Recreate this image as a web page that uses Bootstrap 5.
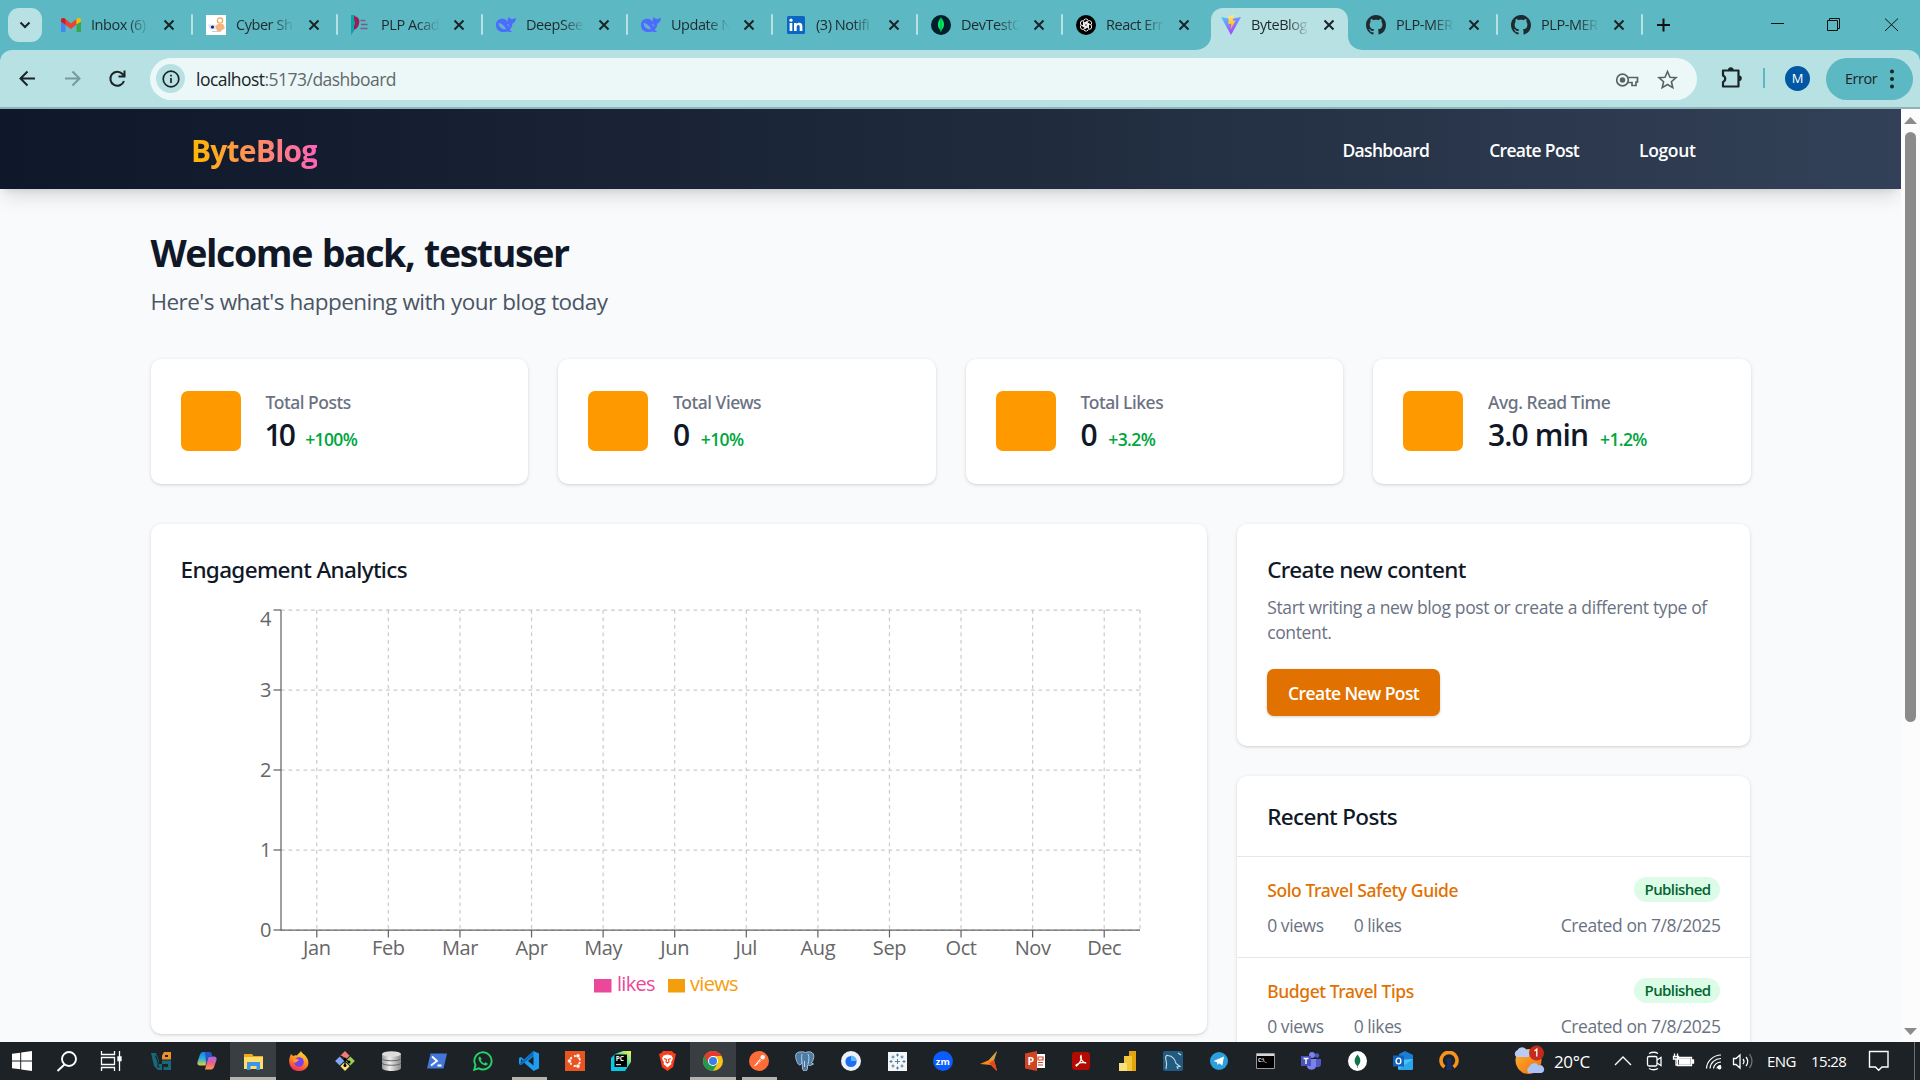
<!DOCTYPE html>
<html lang="en">
<head>
<meta charset="utf-8">
<title>ByteBlog</title>
<link rel="stylesheet" href="https://cdn.jsdelivr.net/npm/bootstrap@5.3.0/dist/css/bootstrap.min.css">
<style>
html,body{height:100%;overflow:hidden}
body{font-family:"Open Sans","Noto Sans",sans-serif;color:#101828;background:#f9fafc;font-size:17.5px;line-height:25px;width:1920px;height:1080px}
svg{display:block;flex:none}
svg.defs{position:absolute}
/* browser chrome */
.tabstrip{height:50px;background:#5cb8c2;padding-left:8px}
.tab-search{width:34px;height:34px;border-radius:11px;background:#b8e1e4;margin-top:8px;margin-right:5px}
.tab-item{width:145px;height:50px;padding:0 0 0 14px;position:relative;font-size:14.5px;color:#1f2a2e;line-height:50px}
.tab-item::after{content:"";position:absolute;right:-1px;top:14px;width:2px;height:21px;border-radius:1px;background:#b8e1e4}
.tab-item.plain::after{display:none}
.tab-label{width:60px;margin-left:10px;white-space:nowrap;letter-spacing:-.45px;-webkit-mask-image:linear-gradient(90deg,#000 60%,transparent 98%);mask-image:linear-gradient(90deg,#000 60%,transparent 98%)}
.tab-x{margin-left:12px}
.tab-item.current{z-index:1}
.tab-shape{position:absolute;left:-13px;top:8px;z-index:-1}
.toolbar-row{height:57px;background:#5cb8c2}
.toolbar-in{background:#b8e1e4;border-radius:12px 12px 0 0;height:57px}
.omni{width:1547px;height:42px;border-radius:21px;background:#ecf8f8;margin-left:13px;padding:2px 18px 0 6px}
.info-dot{width:29px;height:29px;border-radius:50%;background:#b8e1e4;margin-top:-2px}
.url-text{font-size:17.5px;margin-left:11px;color:#60696b;letter-spacing:-.53px}
.url-text b{font-weight:400;color:#1b2427}
.avatar-m{width:25px;height:25px;border-radius:50%;background:#0057a3;color:#fff;font-size:13px;line-height:25px;text-align:center}
.err-pill{width:87px;height:42px;border-radius:21px;background:#5cb8c2;font-size:14.5px;color:#1b2427;padding-left:19px;margin-left:16px;letter-spacing:-.5px;gap:12px}
.chrome-line{height:2px;background:#8fb3b7}
/* page */
.viewport-area{height:933px;overflow:hidden}
.page-col{width:1901px;background:#f9fafc}
.site-nav{height:80px;background:linear-gradient(90deg,#0f172a,#1e293b 50%,#334158);box-shadow:0 12px 18px -4px rgba(0,0,0,.12),0 5px 7px -4px rgba(0,0,0,.1);padding:3px 205.500px 0 191px}
.brand-text{font-size:30px;font-weight:700;line-height:40px;letter-spacing:-.8px;background:linear-gradient(90deg,#ffb900,#ff63b8);-webkit-background-clip:text;background-clip:text;color:transparent}
.nav-links{gap:60px}
.nav-links a{color:#fff;font-weight:600;text-decoration:none;white-space:nowrap;letter-spacing:-.68px}
.nav-links a:last-child{letter-spacing:-.35px}
.main-box{width:1600px;margin-left:150.5px;padding-top:39px}
.main-box h1{font-size:37.5px;line-height:50px;font-weight:700;margin:0;letter-spacing:-1.42px;word-spacing:1.500px}
.sub-text{font-size:22.5px;line-height:30px;color:#4a5565;margin:9px 0 42px;letter-spacing:-.55px;word-spacing:.5px}
.grid-row{--bs-gutter-x:30px}
.second-row{margin-top:40px}
.panel{background:#fff;border-radius:10px;box-shadow:0 1px 4px rgba(0,0,0,.1),0 1px 2px rgba(0,0,0,.08)}
.stat{height:125px;padding:32px 30px 0}
.stat-sq{width:60px;height:60px;border-radius:7px;background:#ff9900;margin-right:25px}
.stat-label,.panel-title,.post-link{font-family:"Noto Sans","Open Sans",sans-serif;font-weight:500}
.stat-label{color:#6a7282;letter-spacing:-.45px;line-height:24px;margin-top:-1px}
.stat-val{font-size:30px;line-height:42px;font-weight:600;letter-spacing:-1.3px}
.stat-pct{color:#00a63e;font-weight:600;margin-left:12px;letter-spacing:-.63px}
.stat-val.pair{letter-spacing:-2.800px;margin-left:-1px}
.stat-val.wide{letter-spacing:-.9px}
.panel-title{font-size:22.5px;line-height:30px;margin:0;letter-spacing:-.65px}
.chart-panel{height:510px;padding:31px 30px 29px}
.chart-panel text{font-size:20px;fill:#666;letter-spacing:-.4px}
.create-panel{padding:31px 30px 30px}
.p-text{color:#6a7282;margin:10px 0 24px;width:460px;letter-spacing:-.36px;white-space:nowrap}
.btn-new{background:#e17100;color:#fff;font-weight:600;width:173px;height:47px;border:0;border-radius:7px;font-size:17.5px;padding:2px 0 0;white-space:nowrap;letter-spacing:-.59px;box-shadow:0 1px 3px rgba(0,0,0,.18)}
.recent{margin-top:30px}
.recent .panel-title{padding:26px 30px 24px}
.post-item{border-top:1px solid #e5e7eb;padding:20px 30px}
.post-link{color:#e17100;text-decoration:none;letter-spacing:-.4px;padding-top:1px;height:25px}
.pub{background:#dcfce7;color:#016630;font-size:15px;font-weight:600;line-height:25px;border-radius:13px;width:86px;text-align:center;letter-spacing:-.59px}
.meta-row{color:#6a7282;margin-top:11px;height:24px;letter-spacing:-.42px}
.meta-row span+span{margin-left:30px}
.sbar{width:19px;background:#fcfcfc}
.sthumb{width:11px;height:590px;border-radius:6px;background:#8b8b8b}
/* taskbar */
.taskbar{height:38px;background:#1c2226;color:#fff;font-size:15px}
.tb{width:46px;height:38px;display:flex;align-items:center;justify-content:center;position:relative;flex:none}
.tb.start{width:44px}
.tb.view{width:42px;margin-right:6px}
.tb.lit{background:#393e42}
.tb.run::after{content:"";position:absolute;left:6px;right:5px;bottom:0;height:3px;background:#b5b3ae}
.tb.lit.run::after{left:0;right:0}
.tb svg text{font-family:"Open Sans",sans-serif;font-weight:700}
.temp-text{font-size:17px;letter-spacing:-.4px;width:51px;margin-left:9px}
.lang-text{width:44px;letter-spacing:-.6px}
.clock-text{width:55px;letter-spacing:-.6px}
</style>
</head>
<body>
<svg class="defs" width="0" height="0">
<defs>
<symbol id="x" viewBox="0 0 12 12"><path d="M1.500 1.500l9 9M10.500 1.500l-9 9" stroke="#1b2427" stroke-width="2" fill="none"/></symbol>
<symbol id="whale" viewBox="0 0 20 20"><path d="M0 10C0 5 4 3 8 4c2 .7 3 2 4 3-1-2 0-4 1-5 .6 1.500 2 2 3.500 2L20 3c-.3 3-1.500 5-3.500 5.500C16 12 15 13.500 13.500 15l2.500 1.500c-2 1-4 .3-5 0C5 18.500 0 15.500 0 10z" fill="#4d6bfe"/><path d="M2.500 8c3 0 6 3 7.500 6-3 1-7-1-7.500-6z" fill="#5cb8c2"/><path d="M11 9.500c1.500 0 2 1 2 2" stroke="#5cb8c2" fill="none"/></symbol>
<symbol id="gh" viewBox="0 0 16 16"><path fill="#1f2a30" d="M8 0C3.580 0 0 3.580 0 8c0 3.540 2.290 6.530 5.470 7.590.4.070.55-.17.55-.38 0-.19-.01-.82-.01-1.490-2.010.37-2.530-.49-2.690-.94-.09-.23-.48-.94-.82-1.130-.28-.15-.68-.52-.01-.53.63-.01 1.080.58 1.230.82.72 1.210 1.870.87 2.330.66.07-.52.28-.87.51-1.070-1.780-.2-3.640-.89-3.640-3.950 0-.87.31-1.590.82-2.150-.08-.2-.36-1.020.08-2.120 0 0 .67-.21 2.200.82.64-.18 1.320-.27 2-.27s1.360.09 2 .27c1.530-1.040 2.200-.82 2.200-.82.44 1.100.16 1.920.08 2.120.51.56.82 1.270.82 2.150 0 3.070-1.870 3.750-3.650 3.950.29.25.54.73.54 1.480 0 1.070-.01 1.930-.01 2.200 0 .21.15.46.55.38A8.010 8.010 0 0 0 16 8c0-4.420-3.580-8-8-8z"/></symbol>
<linearGradient id="vg" x1="0" y1="0" x2=".6" y2="1"><stop stop-color="#41d1ff"/><stop offset="1" stop-color="#bd34fe"/></linearGradient>
<linearGradient id="vy" x1="0" y1="0" x2="0" y2="1"><stop stop-color="#ffea83"/><stop offset="1" stop-color="#ffa800"/></linearGradient>
<linearGradient id="cp1" x1="0" y1="0" x2="0" y2="1"><stop stop-color="#1a7fe8"/><stop offset=".5" stop-color="#2bb0d8"/><stop offset="1" stop-color="#e8d03a"/></linearGradient>
<linearGradient id="cp2" x1="0" y1="0" x2="0" y2="1"><stop stop-color="#9b6cf0"/><stop offset=".5" stop-color="#ee5d8a"/><stop offset="1" stop-color="#ff9a4a"/></linearGradient>
<linearGradient id="ff" x1="0.700" y1="0" x2=".3" y2="1"><stop stop-color="#ffe03a"/><stop offset=".5" stop-color="#ff8a1e"/><stop offset="1" stop-color="#f0285a"/></linearGradient>
<linearGradient id="db" x1="0" x2="1"><stop stop-color="#999"/><stop offset=".4" stop-color="#eee"/><stop offset="1" stop-color="#888"/></linearGradient>
<linearGradient id="ws" x1="0" y1="0" x2="1" y2="1"><stop stop-color="#ffb52e"/><stop offset="1" stop-color="#ee6a12"/></linearGradient>
<linearGradient id="pyc" x1="0" y1="1" x2="1" y2="0"><stop stop-color="#07c3f2"/><stop offset=".5" stop-color="#12cdd4"/><stop offset=".7" stop-color="#7fe08a"/><stop offset="1" stop-color="#fcf84a"/></linearGradient>
</defs>
</svg>

<header>
<div class="tabstrip d-flex">
  <div class="tab-search d-flex align-items-center justify-content-center"><svg width="12" height="8" viewBox="0 0 12 8"><path d="M1.500 1.500L6 6l4.500-4.500" fill="none" stroke="#1b2427" stroke-width="2"/></svg></div>
  <div class="tab-item d-flex align-items-center"><svg width="20" height="15" viewBox="0 0 20 15"><path d="M0 2v12h4.500V6z" fill="#4285f4"/><path d="M20 2v12h-4.500V6z" fill="#34a853"/><path d="M0 1.800C0 .5 2-.6 4.500 1L10 5.500 15.500 1 15.500 6.500 10 11 0 3.500z" fill="#ea4335"/><path d="M0 2.500C0 0 2.500-.6 4.500 1v5.500L0 3.500z" fill="#c5221f"/><path d="M20 2.500C20 0 17.500-.6 15.500 1v5.500L20 3.500z" fill="#fbbc04"/></svg><span class="tab-label">Inbox (6)</span><svg class="tab-x" width="12" height="12"><use href="#x"/></svg></div>
  <div class="tab-item d-flex align-items-center"><svg width="20" height="20" viewBox="0 0 20 20"><path fill="#fff" d="M0 0h20v20H0z"/><circle cx="14" cy="5.500" r="2.600" fill="none" stroke="#f4a55c" stroke-width="1.300"/><path d="M9 11l3-2h5l2 4-4 3h-4z" fill="#f7b57a"/><path d="M2 9.500h7l1 5H4z" fill="#dde3f4"/><circle cx="6.500" cy="12" r="1.600" fill="#17236a"/><path d="M6 16.500h9" stroke="#c3cde8"/></svg><span class="tab-label">Cyber Sh</span><svg class="tab-x" width="12" height="12"><use href="#x"/></svg></div>
  <div class="tab-item d-flex align-items-center"><svg width="20" height="20" viewBox="0 0 20 20"><path d="M0 0h4v6l2 2-3 8-3 4z" fill="#10a3a6"/><path d="M3 1c5 1 6 4 5 8-1 3.500-2.500 5-5 5.500V11c1.500-2 1.500-4.500 0-6z" fill="#9c1c55"/><path d="M9.500 5.500h5M10 9.500h6.500M9.500 13.500h7" stroke="#7a5c8c" stroke-width="1.400"/></svg><span class="tab-label">PLP Acad</span><svg class="tab-x" width="12" height="12"><use href="#x"/></svg></div>
  <div class="tab-item d-flex align-items-center"><svg width="20" height="20"><use href="#whale"/></svg><span class="tab-label">DeepSee</span><svg class="tab-x" width="12" height="12"><use href="#x"/></svg></div>
  <div class="tab-item d-flex align-items-center"><svg width="20" height="20"><use href="#whale"/></svg><span class="tab-label">Update N</span><svg class="tab-x" width="12" height="12"><use href="#x"/></svg></div>
  <div class="tab-item d-flex align-items-center"><svg width="20" height="20" viewBox="0 0 20 20"><rect x="1" y="1" width="18" height="18" rx="1.500" fill="#0a66c2"/><path d="M3.600 8h2.700v8H3.600zM8 8h2.600v1.200C11.200 8.200 12 7.800 13.200 7.800c2.300 0 3.200 1.400 3.200 3.800V16h-2.700v-4c0-1.200-.3-1.900-1.300-1.900S10.700 11 10.700 12v4H8z" fill="#fff"/><circle cx="5" cy="5.200" r="1.600" fill="#fff"/></svg><span class="tab-label">(3) Notifi</span><svg class="tab-x" width="12" height="12"><use href="#x"/></svg></div>
  <div class="tab-item d-flex align-items-center"><svg width="20" height="20" viewBox="0 0 20 20"><circle cx="10" cy="10" r="10" fill="#001e2b"/><path d="M10 2.500c4 4.500 4 9.500.2 13V17h-.6v-1.500C6 12 6 7 10 2.500z" fill="#00ed64"/><path d="M10 3v13" stroke="#07a34c"/></svg><span class="tab-label">DevTestC</span><svg class="tab-x" width="12" height="12"><use href="#x"/></svg></div>
  <div class="tab-item plain d-flex align-items-center"><svg width="20" height="20" viewBox="0 0 20 20"><circle cx="10" cy="10" r="10" fill="#000"/><g fill="none" stroke="#fff" stroke-width=".9"><path id="kn" d="M7.500 11.500V6.300a2.500 2.500 0 0 1 4.700-1.100M7.500 7.200l4.600 2.600"/><use href="#kn" transform="rotate(60 10 10)"/><use href="#kn" transform="rotate(120 10 10)"/><use href="#kn" transform="rotate(180 10 10)"/><use href="#kn" transform="rotate(240 10 10)"/><use href="#kn" transform="rotate(300 10 10)"/></g></svg><span class="tab-label">React Err</span><svg class="tab-x" width="12" height="12"><use href="#x"/></svg></div>
  <div class="tab-item current plain d-flex align-items-center"><svg class="tab-shape" width="170" height="42" viewBox="0 0 170 42"><path d="M0 42c10 0 17-6 17-14V12C17 5 22 0 29 0h113c7 0 12 5 12 12v16c0 8 6 14 16 14z" fill="#b8e1e4"/></svg><svg width="20" height="20" viewBox="0 0 20 20"><path d="M0 2l10 2 10-2-10 18z" fill="url(#vg)"/><path d="M7.500 1l6-1-2 5.500 3 .2-5 9 .8-6-3 .5z" fill="url(#vy)"/></svg><span class="tab-label">ByteBlog</span><svg class="tab-x" width="12" height="12"><use href="#x"/></svg></div>
  <div class="tab-item d-flex align-items-center"><svg width="20" height="20"><use href="#gh"/></svg><span class="tab-label">PLP-MER</span><svg class="tab-x" width="12" height="12"><use href="#x"/></svg></div>
  <div class="tab-item d-flex align-items-center"><svg width="20" height="20"><use href="#gh"/></svg><span class="tab-label">PLP-MER</span><svg class="tab-x" width="12" height="12"><use href="#x"/></svg></div>
  <svg width="278" height="50" viewBox="1642 0 278 50" fill="none" stroke="#111"><path d="M1663.500 18.500v13M1657 25h13" stroke-width="2"/><path d="M1771 23.500h13M1827.500 20.500h10v10h-10zM1829.500 20v-1.500h10v10H1838M1885 18.500l13 12.500M1898 18.500L1885 31"/></svg>
</div>
<div class="toolbar-row"><div class="toolbar-in d-flex align-items-center">
  <svg width="137" height="57" viewBox="0 50 137 57" fill="none" stroke="#1b2427" stroke-width="2"><path d="M35 78.500H21M27.500 71.500l-7 7 7 7"/><path d="M65 78.500h14M72.500 71.500l7 7-7 7" stroke="#7b989b"/><path d="M124 81a7 7 0 1 1-1.500-7l2 2M124.500 70.500V76.500H118.500"/></svg>
  <div class="omni d-flex align-items-center"><span class="info-dot d-flex align-items-center justify-content-center"><svg width="18" height="18" viewBox="0 0 18 18"><circle cx="9" cy="9" r="7.800" fill="none" stroke="#1b2427" stroke-width="1.700"/><path d="M9 8v5M9 4.800v1.700" stroke="#1b2427" stroke-width="1.700"/></svg></span><span class="url-text"><b>localhost</b>:5173/dashboard</span>
    <svg class="ms-auto" width="64" height="24" viewBox="0 0 64 24" fill="none" stroke="#586264" stroke-width="1.700"><circle cx="7.500" cy="12" r="5.800"/><circle cx="7.500" cy="12" r="1.900" fill="#586264"/><path d="M12.500 9.500H22.500v4.500h-1.500v3.500h-4V14.500h-4"/><path d="M52.500 3.500l2.500 5.700 6 .5-4.600 4 1.400 6-5.300-3.200-5.300 3.200 1.400-6-4.600-4 6-.5z" stroke-width="1.600"/></svg></div>
  <svg width="88" height="40" viewBox="1696.500 60 88 40"><path d="M1722.500 71.500h15.500v16h-15.500v-4.500a3.500 3.500 0 0 0 0-6.500z" fill="none" stroke="#1b2427" stroke-width="2.200" stroke-linejoin="round"/><path d="M1727.500 71a2.800 2.800 0 0 1 5.600 0zM1738.500 76.500a2.800 2.800 0 0 1 0 5.600z" fill="#1b2427"/><path d="M1763.500 69v20" stroke="#5cb8c2" stroke-width="2"/></svg>
  <div class="avatar-m">M</div>
  <div class="err-pill d-flex align-items-center"><span>Error</span><svg width="6" height="22" viewBox="0 0 6 22" fill="#1b2427"><circle cx="3" cy="3.500" r="2"/><circle cx="3" cy="11" r="2"/><circle cx="3" cy="18.500" r="2"/></svg></div>
</div></div>
<div class="chrome-line"></div>
</header>

<div class="viewport-area d-flex">
<div class="page-col">
  <nav class="site-nav d-flex align-items-center justify-content-between">
    <span class="brand-text">ByteBlog</span>
    <div class="nav-links d-flex"><a href="#">Dashboard</a><a href="#">Create Post</a><a href="#">Logout</a></div>
  </nav>
  <main class="main-box">
    <h1>Welcome back, testuser</h1>
    <p class="sub-text">Here's what's happening with your blog today</p>
    <div class="row grid-row row-cols-4">
      <div class="col"><div class="panel stat d-flex"><div class="stat-sq"></div><div><div class="stat-label">Total Posts</div><div class="d-flex align-items-baseline"><span class="stat-val pair">10</span><span class="stat-pct">+100%</span></div></div></div></div>
      <div class="col"><div class="panel stat d-flex"><div class="stat-sq"></div><div><div class="stat-label">Total Views</div><div class="d-flex align-items-baseline"><span class="stat-val">0</span><span class="stat-pct">+10%</span></div></div></div></div>
      <div class="col"><div class="panel stat d-flex"><div class="stat-sq"></div><div><div class="stat-label">Total Likes</div><div class="d-flex align-items-baseline"><span class="stat-val">0</span><span class="stat-pct">+3.2%</span></div></div></div></div>
      <div class="col"><div class="panel stat d-flex"><div class="stat-sq"></div><div><div class="stat-label">Avg. Read Time</div><div class="d-flex align-items-baseline"><span class="stat-val wide">3.0 min</span><span class="stat-pct">+1.2%</span></div></div></div></div>
    </div>
    <div class="row grid-row second-row">
      <div class="col-8"><section class="panel chart-panel"><h2 class="panel-title">Engagement Analytics</h2>
        <svg width="996" height="418" viewBox="181 585 996 418" id="chart"></svg>
      </section></div>
      <div class="col-4">
        <section class="panel create-panel"><h2 class="panel-title">Create new content</h2><p class="p-text">Start writing a new blog post or create a different type of<br>content.</p><button class="btn btn-new">Create New Post</button></section>
        <section class="panel recent"><h2 class="panel-title">Recent Posts</h2>
          <div class="post-item"><div class="d-flex justify-content-between"><a class="post-link" href="#">Solo Travel Safety Guide</a><span class="pub">Published</span></div><div class="meta-row d-flex"><span>0 views</span><span>0 likes</span><span class="ms-auto">Created on 7/8/2025</span></div></div>
          <div class="post-item"><div class="d-flex justify-content-between"><a class="post-link" href="#">Budget Travel Tips</a><span class="pub">Published</span></div><div class="meta-row d-flex"><span>0 views</span><span>0 likes</span><span class="ms-auto">Created on 7/8/2025</span></div></div>
        </section>
      </div>
    </div>
  </main>
</div>
<div class="sbar d-flex flex-column align-items-center"><svg width="13" height="23" viewBox="0 0 13 23"><path d="M0 15l6.500-7L13 15z" fill="#8b8b8b"/></svg><div class="sthumb"></div><svg class="mt-auto" width="13" height="15" viewBox="0 0 13 15"><path d="M0 1l6.500 7L13 1z" fill="#8b8b8b"/></svg></div>
</div>

<footer class="taskbar d-flex align-items-center">
  <div class="tb start"><svg width="20" height="20" viewBox="0 0 20 20"><path fill="#fff" d="M0 2.800l8.200-1.100v7.800H0zM9.200 1.500L20 0v9.500H9.200zM0 10.500h8.200v7.800L0 17.200zM9.200 10.500H20V20L9.200 18.500z"/></svg></div>
  <div class="tb"><svg width="22" height="22" viewBox="0 0 22 22" fill="none" stroke="#fff" stroke-width="1.900"><circle cx="13" cy="9" r="7"/><path d="M8.500 14.500L1.500 21"/></svg></div>
  <div class="tb view"><svg width="22" height="20" viewBox="0 0 22 20" fill="none" stroke="#fff" stroke-width="1.300"><path d="M1.500 0v3.500h13V0M1.500 20v-3.500h13V20M1.500 6.500h13v7h-13zM19.500 0v20"/><path d="M18 6h3v3.500h-3z" fill="#fff"/></svg></div>
  <div class="tb"><svg width="21" height="19" viewBox="0 0 21 19"><path d="M0 1h5l3 8v3h3v6H7L3 14z" fill="#17697a"/><path d="M4.500 3.500l2.500 6.500v5h1.500" fill="none" stroke="#1c2226" stroke-width="1.200"/><path d="M11 8.500h9v9.500h-7.500v-3h4.500v-3h-6z" fill="#17697a"/><path d="M13 0h7v7.500h-9V3.500z" fill="#f0902a"/><path d="M14 3h3v2h-3z" fill="#1c2226"/></svg></div>
  <div class="tb"><svg width="20" height="20" viewBox="0 0 20 20"><path d="M6 1h6L8.500 14.500H3C1 14.500 0 13 .5 11L3 3.500C3.500 2 4.500 1 6 1z" fill="url(#cp1)"/><path d="M14 18.500H8l3.500-13H17c2 0 3 1.500 2.500 3.500L17 16c-.5 1.500-1.500 2.500-3 2.500z" fill="url(#cp2)"/><path d="M8 1h5c1.200 0 2 1 2.200 4.500H11.500L9 13z" fill="#2257c9"/></svg></div>
  <div class="tb lit run"><svg width="19" height="17" viewBox="0 0 19 17"><path d="M0 1h8l1.500 2H19v13H0z" fill="#f2a81d"/><path d="M0 4h19v12H0z" fill="#ffdc6b"/><path d="M3 17v-8h13v8h-3.500v-4h-6v4z" fill="#3b96e8"/></svg></div>
  <div class="tb"><svg width="20" height="20" viewBox="0 0 20 20"><path d="M12 0c1 3 4 3 6 7 4 7-1 13-8 13S-1 14 .5 7L2 3l2 2c2-1 3-1 4-.5C9 2.500 11 2 12 0z" fill="url(#ff)"/><circle cx="10" cy="11" r="4.800" fill="#7a3ff0"/><path d="M4 8c3-1 4 0 6 1-1 2-3 1.500-4 3-2-1-2-3-2-4z" fill="#ff9a2a"/></svg></div>
  <div class="tb"><svg width="20" height="20" viewBox="0 0 20 20"><g transform="rotate(45 10 10)"><path d="M3 3h6.500v6.500H3z" fill="#f47a78"/><path d="M10.500 3H17v6.500h-6.500z" fill="#9bcf58"/><path d="M3 10.500h6.500V17H3z" fill="#80a8f7"/><path d="M10.500 10.500H17V17h-6.500z" fill="#fce07a"/></g><path d="M6 5l8 6M10 8v7" stroke="#14181b" stroke-width="1.400"/><circle cx="10" cy="8" r="1.500"/><circle cx="14" cy="11" r="1.500"/><circle cx="10" cy="14.500" r="1.500"/></svg></div>
  <div class="tb"><svg width="19" height="20" viewBox="0 0 19 20"><path d="M0 3v14c0 4 19 4 19 0V3z" fill="url(#db)"/><ellipse cx="9.500" cy="3" rx="9.500" ry="2.800" fill="#dcdcdc"/><path d="M0 7.500c0 3 19 3 19 0M0 12c0 3 19 3 19 0" stroke="#666" fill="none"/></svg></div>
  <div class="tb"><svg width="20" height="16" viewBox="0 0 20 16"><path d="M3.500.5H20L16.500 15.500H0z" fill="#4277d8"/><path d="M5 3.500l5 4.500-6 4.500M10.500 12.500h4" fill="none" stroke="#fff" stroke-width="1.800"/></svg></div>
  <div class="tb"><svg width="20" height="20" viewBox="0 0 20 20"><path d="M1.200 18.800l1.300-4.700a8.600 8.600 0 1 1 3.300 3.300z" fill="none" stroke="#25d366" stroke-width="1.900"/><path d="M7 5.500c-1 0-1.700 1-1.500 2.300.4 3 3.700 6.200 6.700 6.600 1.500.2 2.600-.8 2.500-2l-2.300-1.200-1.300 1.200c-1.400-.5-2.800-2-3.400-3.300l1-1.100z" fill="#25d366"/></svg></div>
  <div class="tb run"><svg width="20" height="20" viewBox="0 0 20 20"><path d="M14.500 0L20 2.500v15L14.500 20 5 11.500 2 14 0 13V7l2-1 3 2.500zM14.500 5.500L9 10l5.500 4.500zM2 8v4l2-2z" fill="#1f9cf0" fill-rule="evenodd"/><path d="M14.500 0L0 13l2 1L14.500 5z" fill="#0a6fc0"/></svg></div>
  <div class="tb"><svg width="20" height="20" viewBox="0 0 20 20"><path d="M0 0h20v20H0z" fill="#e95420"/><circle cx="10" cy="10" r="5" fill="none" stroke="#fff" stroke-width="1.800" stroke-dasharray="8 2.470" stroke-dashoffset="-1"/><g fill="#fff" stroke="#e95420" stroke-width=".6"><circle cx="4.400" cy="10" r="2"/><circle cx="13" cy="4.800" r="2"/><circle cx="13" cy="15.200" r="2"/></g></svg></div>
  <div class="tb"><svg width="20" height="20" viewBox="0 0 20 20"><path d="M4 3l8-3h8v11l-6 9H0V7z" fill="url(#pyc)"/><path d="M3.500 3.500h12.500v12.500H3.500z"/><text x="4.700" y="10" font-size="6.500" fill="#fff">PC</text><path d="M5 13.700h5" stroke="#fff"/></svg></div>
  <div class="tb"><svg width="17" height="20" viewBox="0 0 17 20"><path d="M4 0h9l1.500 2L17 3l-1 4-2 9-5.500 4L3 16 1 7 0 3l2.500-1z" fill="#fb3f1c"/><path d="M8.500 3.500l4 1 1.500 3-2 4 .5 1.500-4 3.500-4-3.500.5-1.500-2-4 1.500-3z" fill="#fff"/><path d="M5 7.500l2.500 1L7 11l1.500 1 1.500-1-.5-2.500 2.500-1" fill="none" stroke="#fb3f1c" stroke-width="1.200"/></svg></div>
  <div class="tb lit run"><svg width="20" height="20" viewBox="0 0 20 20"><circle cx="10" cy="10" r="10" fill="#fbc116"/><path d="M1.340 5A10 10 0 0 0 10 20l4.500-7.500L10 10z" fill="#229a4c"/><path d="M1.340 5a10 10 0 0 1 17.320 0H10L5.500 12.500z" fill="#e33b2e"/><circle cx="10" cy="10" r="5" fill="#fff"/><circle cx="10" cy="10" r="4" fill="#3b7ded"/></svg></div>
  <div class="tb run"><svg width="20" height="20" viewBox="0 0 20 20"><circle cx="10" cy="10" r="10" fill="#ff6c37"/><path d="M4.500 15.500L11 8l1.500 1.500-5.500 5z" fill="#fff"/><circle cx="13.700" cy="6.300" r="2.200" fill="#fff"/><path d="M9 12l4-4" stroke="#ff6c37" stroke-width=".7"/></svg></div>
  <div class="tb"><svg width="20" height="20" viewBox="0 0 20 20"><path d="M5 1C1 1 0 4 1 8c1 3 2 6 4 6l2-2 .5 5c0 2 1 3 2.500 3s2.500-1 2.500-3V14l3 .5 3-1.500-2-1c2-3 3.500-8 1-10C15 0 12 1 10.500 1.500 9 1 7 .5 5 1z" fill="#4b7ba6" stroke="#c6d5e2" stroke-width=".8"/><path d="M7 3C6 6 7 9 7 12M13 3c1.500 3 1 6 0 10M9.500 10v6" stroke="#dce6ee" stroke-width=".8" fill="none"/></svg></div>
  <div class="tb"><svg width="20" height="20" viewBox="0 0 20 20"><circle cx="10" cy="10" r="10" fill="#edf1fb"/><circle cx="10" cy="10.500" r="5.600" fill="#1c6ff0"/><path d="M10 4.500a5.500 5.500 0 0 1 5.500 5.500H10z" fill="#64b5fb"/></svg></div>
  <div class="tb"><svg width="19" height="19" viewBox="0 0 19 19"><path fill="#f5f6f8" d="M0 0h19v19H0z"/><g stroke="#4c7ea6" stroke-width="1"><path d="M9.500 7v5M7 9.500h5M9.500 1.500v3M8 3h3M9.500 14.500v3M8 16h3M1.500 9.500h3M3 8v3M14.500 9.500h3M16 8v3M5 3.500v3M3.500 5h3M14 3.500v3M12.500 5h3M5 12.500v3M3.500 14h3M14 12.500v3M12.500 14h3"/></g></svg></div>
  <div class="tb"><svg width="20" height="20" viewBox="0 0 20 20"><circle cx="10" cy="10" r="10" fill="#0b5cff"/><text x="2.800" y="13.500" font-size="9.500" fill="#fff">zm</text></svg></div>
  <div class="tb"><svg width="18" height="20" viewBox="0 0 18 20"><path d="M17 0l-3 9 3 11-6-6-11-1 9-4z" fill="#f58a1f"/><path d="M17 20l-3-11-5 3z" fill="#e8451c"/><path d="M17 0l-3 9-5 0z" fill="#c9a34c"/></svg></div>
  <div class="tb"><svg width="20" height="20" viewBox="0 0 20 20"><path fill="#fff" d="M10 3h10v14H10z"/><path d="M13 6h5v3h-5zM13 11.500h5M13 14h5" fill="none" stroke="#d14524" stroke-width="1.200"/><path fill="#d14524" d="M0 2.500L12 0v20L0 17.500z"/><text x="2.500" y="13.800" font-size="10.500" fill="#fff">P</text></svg></div>
  <div class="tb"><svg width="18" height="18" viewBox="0 0 18 18"><rect width="18" height="18" rx="3" fill="#b30b00"/><path d="M9 3.500c1.500 3-1.500 8-4.500 10.500-2-1 3-4 9-3.500 1.500 1.500-3.500 0-5-5 0-1 .2-1.800.5-2z" fill="none" stroke="#fff" stroke-width="1.200"/></svg></div>
  <div class="tb"><svg width="17" height="20" viewBox="0 0 17 20"><path fill="#e3a50f" d="M10 0h7v20h-7z"/><path fill="#f2c73a" d="M5 5h8v15H5z"/><path fill="#f9e07c" d="M0 12h8v8H0z"/></svg></div>
  <div class="tb"><svg width="20" height="20" viewBox="0 0 20 20"><rect width="20" height="20" rx="2" fill="#215b80"/><path d="M3 18c1-4 1-6 0-9-1-3 0-5 2-4.500 4 .5 7 4 8 8l4 3-3 .5 1 2M15 2l3 2" fill="none" stroke="#c8dbe8" stroke-width="1.100"/></svg></div>
  <div class="tb"><svg width="18" height="18" viewBox="0 0 18 18"><circle cx="9" cy="9" r="9" fill="#2ba0dc"/><path d="M3.500 9L14 4.500 12.300 13.500 9 11.300 7.500 13 7 10.300z" fill="#fff"/></svg></div>
  <div class="tb"><svg width="19" height="16" viewBox="0 0 19 16"><path d="M.5.500h18v15H.5z" stroke="#9a9a9a"/><path d="M1 1h17v2H1z" fill="#d8d8d8"/><text x="2" y="8.500" font-size="5" fill="#fff">C:\_</text></svg></div>
  <div class="tb"><svg width="20" height="18" viewBox="0 0 20 18"><circle cx="16" cy="3.500" r="2.200" fill="#5059c9"/><circle cx="11" cy="3" r="3" fill="#7b83eb"/><path d="M13 7h7v5c0 4-5 4-6 2z" fill="#5059c9"/><path d="M6 7h9v7c0 5-9 5-9 0z" fill="#7b83eb"/><path d="M0 4h10v10H0z" fill="#4b53bc"/><path d="M2.500 6.500h5M5 6.500v5.500" stroke="#fff" stroke-width="1.400"/></svg></div>
  <div class="tb"><svg width="19" height="20" viewBox="0 0 19 20"><ellipse cx="9.500" cy="10" rx="9.500" ry="10" fill="#fff"/><path d="M9.500 3.500c4 4.500 3.500 8.500.3 11.500v2h-.6v-2C6 12 5.500 8 9.500 3.500z" fill="#12744b"/></svg></div>
  <div class="tb"><svg width="20" height="20" viewBox="0 0 20 20"><path d="M6 3l6-3 8 4v8H6z" fill="#1a7fd4"/><path d="M5 9l15-1v9c0 1.500-1 2-2 2H7c-1 0-2-.5-2-2z" fill="#4fc3f7"/><path d="M20 8L5 18.500l1.500.5H18c1 0 2-.5 2-2z" fill="#28a8ea"/><path d="M0 4.500h11v11H0z" fill="#0f62bd"/><ellipse cx="5.500" cy="10" rx="2.400" ry="2.900" fill="none" stroke="#fff" stroke-width="1.400"/></svg></div>
  <div class="tb"><svg width="20" height="20" viewBox="0 0 20 20"><path d="M5.500 16A8 8 0 1 1 14.500 16" fill="none" stroke="#f7941d" stroke-width="3.600"/><circle cx="10" cy="9.500" r="2.700" fill="#1a2b63"/><path d="M8.500 10h3l1.500 9H7z" fill="#1a2b63"/></svg></div>
  <svg class="ms-auto" width="31" height="32" viewBox="1514.500 1045 31 32"><path d="M1516 1060a13 14 0 0 0 26 0a13 11 0 0 0-26 0z" fill="url(#ws)"/><path d="M1517 1057a4 4 0 0 1 1-7 5 5 0 0 1 9 0 3.500 3.500 0 0 1 1 7z" fill="#b9cdf3"/><path d="M1529 1073a4 4 0 0 1 1-6.500 5 5 0 0 1 9-1 4 4 0 0 1 3 7.500z" fill="#a9c4f5"/><circle cx="1537" cy="1053" r="7.500" fill="#c42b1c"/><path d="M1535 1051l2.300-1.800v7.300" stroke="#fff" stroke-width="1.300" fill="none"/></svg>
  <span class="temp-text">20°C</span>
  <svg width="162" height="38" viewBox="1605 1042 162 38" fill="none" stroke="#fff" stroke-width="1.300"><path d="M1615 1065l8-8 8 8"/><rect x="1647.500" y="1056.500" width="9.500" height="9.500" rx="1.500"/><path d="M1657 1060l4-2.500v8l-4-2.500M1649 1053.500q5-2.500 9 0M1649 1068.500q5 2.500 9 0"/><path d="M1677.500 1057.500h14v8h-14z"/><path d="M1679.500 1059h10.500v5h-10.500zM1692 1060h1.500v3h-1.500z" fill="#fff"/><path d="M1674.500 1053.500v3M1677.500 1053.500v3M1673.500 1056.500h5v2.500h-5zM1676 1059v6h2"/><path d="M1706.500 1068.500a15 14 0 0 1 14.500-13.500M1710 1068.500a11 10.500 0 0 1 11-10M1713.500 1068.500a7.500 7 0 0 1 7.500-6.500M1717 1068.500a4 3.500 0 0 1 4-3" stroke-width="1.200"/><circle cx="1719.500" cy="1067.500" r="1.300" fill="#fff"/><path d="M1733.500 1058.500h2.500l4-3.500v13l-4-3.500h-2.500zM1743 1059q2 2.500 0 5M1746 1057q3.500 4.500 0 9"/><path d="M1749.500 1054q5 7.500 0 14" stroke="#6d7275"/></svg>
  <span class="lang-text">ENG</span><span class="clock-text">15:28</span>
  <svg width="54" height="38" viewBox="1867 1042 54 38" fill="none" stroke="#fff" stroke-width="1.400"><path d="M1870.500 1051.500h18.500v15.500h-6l-3.300 3.300-3.300-3.300h-5.900z"/><path d="M1915.500 1042v38" stroke="#6b7073" stroke-width="1"/></svg>
</footer>
<script src="https://cdn.jsdelivr.net/npm/bootstrap@5.3.0/dist/js/bootstrap.bundle.min.js"></script>
<script>
(function(){
  const months=['Jan','Feb','Mar','Apr','May','Jun','Jul','Aug','Sep','Oct','Nov','Dec'];
  const L=281,R=1140,B=930,step=(R-L)/12;
  let grid='',axis='',labels='';
  for(let i=0;i<=4;i++){
    const y=B-80*i;
    grid+=`<path d="M${L} ${y}H${R}"/>`;
    axis+=`<path d="M${L-7.5} ${y}H${L}"/>`;
    labels+=`<text x="271" y="${i===4?626:y+7}" text-anchor="end">${i}</text>`;
  }
  months.forEach((m,i)=>{
    const x=L+step*(i+.5);
    grid+=`<path d="M${x} 610V${B}"/>`;
    axis+=`<path d="M${x} ${B}v7.5"/>`;
    labels+=`<text x="${x}" y="954.5" text-anchor="middle">${m}</text>`;
  });
  grid+=`<path d="M${R} 610V${B}"/>`;
  axis+=`<path d="M${L} 610V${B}H${R}"/>`;
  document.getElementById('chart').innerHTML=
    `<g fill="none" stroke="#ccc" stroke-width="1.25" stroke-dasharray="3.75">${grid}</g><g fill="none" stroke="#666" stroke-width="1.25">${axis}</g>${labels}
    <path d="M594 979h17.500v13.500H594z" fill="#ec4899"/><text x="617" y="991" style="fill:#ec4899;letter-spacing:-.7px">likes</text>
    <path d="M668 979h17v13.500h-17z" fill="#f59e0b"/><text x="690" y="991" style="fill:#f59e0b;letter-spacing:-.7px">views</text>`;
})();
</script>
</body>
</html>
